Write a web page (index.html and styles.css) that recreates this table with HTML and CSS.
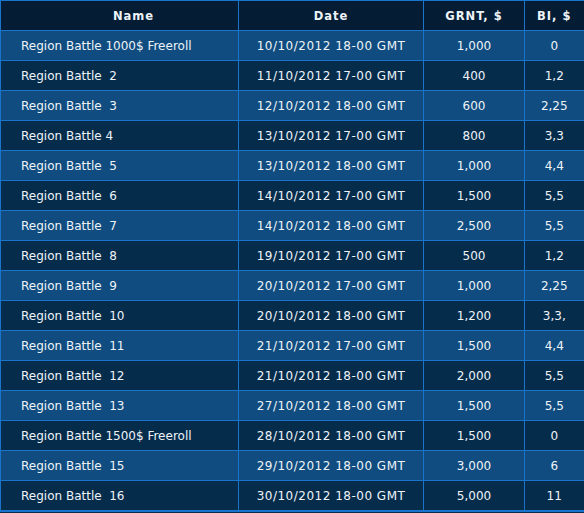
FILE: index.html
```html
<!DOCTYPE html>
<html lang="en">
<head>
    <meta charset="UTF-8">
    <title>Region Battles</title>
    <link rel="stylesheet" href="styles.css">
</head>
<body>
    <table class="schedule">
        <colgroup>
            <col class="col-name">
            <col class="col-date">
            <col class="col-grnt">
            <col class="col-bi">
        </colgroup>
        <thead>
            <tr>
                <th class="name">Name</th>
                <th>Date</th>
                <th>GRNT, $</th>
                <th>BI, $</th>
            </tr>
        </thead>
        <tbody>
            <tr><td class="name">Region Battle 1000$ Freeroll</td><td class="date">10/10/2012 18-00 GMT</td><td>1,000</td><td>0</td></tr>
            <tr><td class="name">Region Battle&nbsp; 2</td><td class="date">11/10/2012 17-00 GMT</td><td>400</td><td>1,2</td></tr>
            <tr><td class="name">Region Battle&nbsp; 3</td><td class="date">12/10/2012 18-00 GMT</td><td>600</td><td>2,25</td></tr>
            <tr><td class="name">Region Battle 4</td><td class="date">13/10/2012 17-00 GMT</td><td>800</td><td>3,3</td></tr>
            <tr><td class="name">Region Battle&nbsp; 5</td><td class="date">13/10/2012 18-00 GMT</td><td>1,000</td><td>4,4</td></tr>
            <tr><td class="name">Region Battle&nbsp; 6</td><td class="date">14/10/2012 17-00 GMT</td><td>1,500</td><td>5,5</td></tr>
            <tr><td class="name">Region Battle&nbsp; 7</td><td class="date">14/10/2012 18-00 GMT</td><td>2,500</td><td>5,5</td></tr>
            <tr><td class="name">Region Battle&nbsp; 8</td><td class="date">19/10/2012 17-00 GMT</td><td>500</td><td>1,2</td></tr>
            <tr><td class="name">Region Battle&nbsp; 9</td><td class="date">20/10/2012 17-00 GMT</td><td>1,000</td><td>2,25</td></tr>
            <tr><td class="name">Region Battle&nbsp; 10</td><td class="date">20/10/2012 18-00 GMT</td><td>1,200</td><td>3,3,</td></tr>
            <tr><td class="name">Region Battle&nbsp; 11</td><td class="date">21/10/2012 17-00 GMT</td><td>1,500</td><td>4,4</td></tr>
            <tr><td class="name">Region Battle&nbsp; 12</td><td class="date">21/10/2012 18-00 GMT</td><td>2,000</td><td>5,5</td></tr>
            <tr><td class="name">Region Battle&nbsp; 13</td><td class="date">27/10/2012 18-00 GMT</td><td>1,500</td><td>5,5</td></tr>
            <tr><td class="name">Region Battle 1500$ Freeroll</td><td class="date">28/10/2012 18-00 GMT</td><td>1,500</td><td>0</td></tr>
            <tr><td class="name">Region Battle&nbsp; 15</td><td class="date">29/10/2012 18-00 GMT</td><td>3,000</td><td>6</td></tr>
            <tr><td class="name">Region Battle&nbsp; 16</td><td class="date">30/10/2012 18-00 GMT</td><td>5,000</td><td>11</td></tr>
        </tbody>
    </table>
</body>
</html>
```

FILE: styles.css
```css
body {
    margin: 0;
    background: #062c4c;
    font-family: 'DejaVu Sans', Verdana, sans-serif;
}
.schedule {
    width: 584px;
    border-collapse: collapse;
    border-style: solid;
    border-color: #1a74cc;
    border-width: 1px 2px 2px 1px;
    table-layout: fixed;
    color: #eef3f8;
    font-size: 12px;
}
.col-name { width: 238px; }
.col-date { width: 185px; }
.col-grnt { width: 101px; }
.col-bi { width: 60px; }
.schedule th,
.schedule td {
    border: 1px solid #1a74cc;
    height: 29px;
    padding: 0;
    text-align: center;
    white-space: nowrap;
}
.schedule th {
    background-color: #041d35;
    font-weight: bold;
    letter-spacing: 1px;
    font-size: 11.5px;
}
.schedule th.name {
    padding-left: 28px;
}
.schedule td.name {
    text-align: left;
    padding-left: 20px;
}
.schedule td.date {
    letter-spacing: 0.5px;
}
.schedule tbody tr:nth-child(odd) td {
    background-color: #104c7f;
}
.schedule tbody tr:nth-child(even) td {
    background-color: #062c4c;
}
```
